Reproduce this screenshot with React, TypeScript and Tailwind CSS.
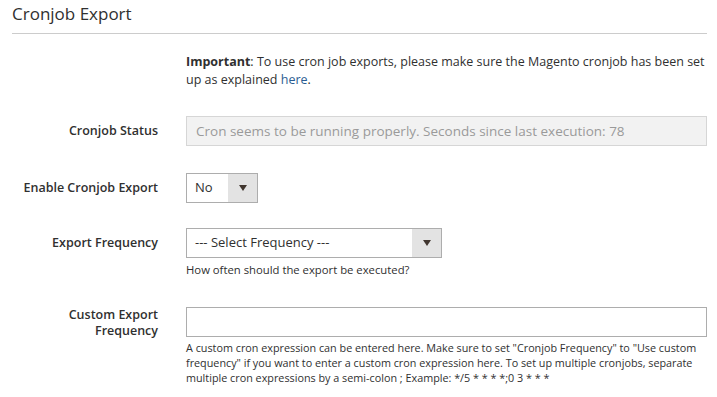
const Arrow = () => (
  <svg width="8" height="6" viewBox="0 0 8 6" className="block">
    <path d="M0 0 H8 L4 6 Z" fill="#41362f" />
  </svg>
);

const Select = ({ value, width }: { value: string; width: string }) => (
  <div className={`flex h-[30px] border border-[#adadad] bg-white ${width}`}>
    <div className="flex flex-1 items-center pl-[8px] text-[13px] text-[#303030]">{value}</div>
    <div className="flex w-[29px] items-center justify-center bg-[#e3e3e3]">
      <Arrow />
    </div>
  </div>
);

const Row = ({
  label,
  children,
  className = '',
  labelPad = 'pt-[7px]',
}: {
  label: React.ReactNode;
  children: React.ReactNode;
  className?: string;
  labelPad?: string;
}) => (
  <div className={`flex gap-[28px] ${className}`}>
    <div className={`w-[146px] shrink-0 text-right text-[12.5px] font-semibold leading-[16px] text-[#303030] ${labelPad}`}>
      {label}
    </div>
    <div className="flex-1">{children}</div>
  </div>
);

export default function App() {
  return (
    <div
      className="min-h-[397px] bg-white pl-[12px] pr-[10px] text-[#303030]"
      style={{ fontFamily: '"Open Sans", sans-serif' }}
    >
      <div className="border-b border-[#cccccc] pb-[9px] pt-[4px] text-[17px] leading-[20px] text-[#303030]">
        Cronjob Export
      </div>

      <div className="ml-[174px] mt-[19px] text-[12.5px] leading-[18px]">
        <span className="font-bold">Important</span>: To use cron job exports, please make sure the Magento cronjob has been set up as
        explained <span className="text-[#2b5c92]">here</span>.
      </div>

      <Row label="Cronjob Status" className="mt-[27px]">
        <div className="flex h-[30px] items-center border border-[#d6d6d6] bg-[#f2f2f2] pl-[9px] text-[13.5px] text-[#9a9a9a]">
          Cron seems to be running properly. Seconds since last execution: 78
        </div>
      </Row>

      <Row label="Enable Cronjob Export" className="mt-[27px]">
        <Select value="No" width="w-[72px]" />
      </Row>

      <Row label="Export Frequency" className="mt-[25px]">
        <Select value="--- Select Frequency ---" width="w-[256px]" />
        <div className="mt-[4px] text-[11.3px] leading-[15px] text-[#303030]">How often should the export be executed?</div>
      </Row>

      <Row label={<>Custom Export<br />Frequency</>} className="mt-[30px]" labelPad="pt-0">
        <div className="h-[30px] border border-[#adadad] bg-white" />
        <div className="mt-[3px] text-[10.8px] leading-[15px] text-[#303030]">
          A custom cron expression can be entered here. Make sure to set "Cronjob Frequency" to "Use custom frequency" if you
          want to enter a custom cron expression here. To set up multiple cronjobs, separate multiple cron expressions by a
          semi-colon ; Example: */5 * * * *;0 3 * * *
        </div>
      </Row>
    </div>
  );
}
